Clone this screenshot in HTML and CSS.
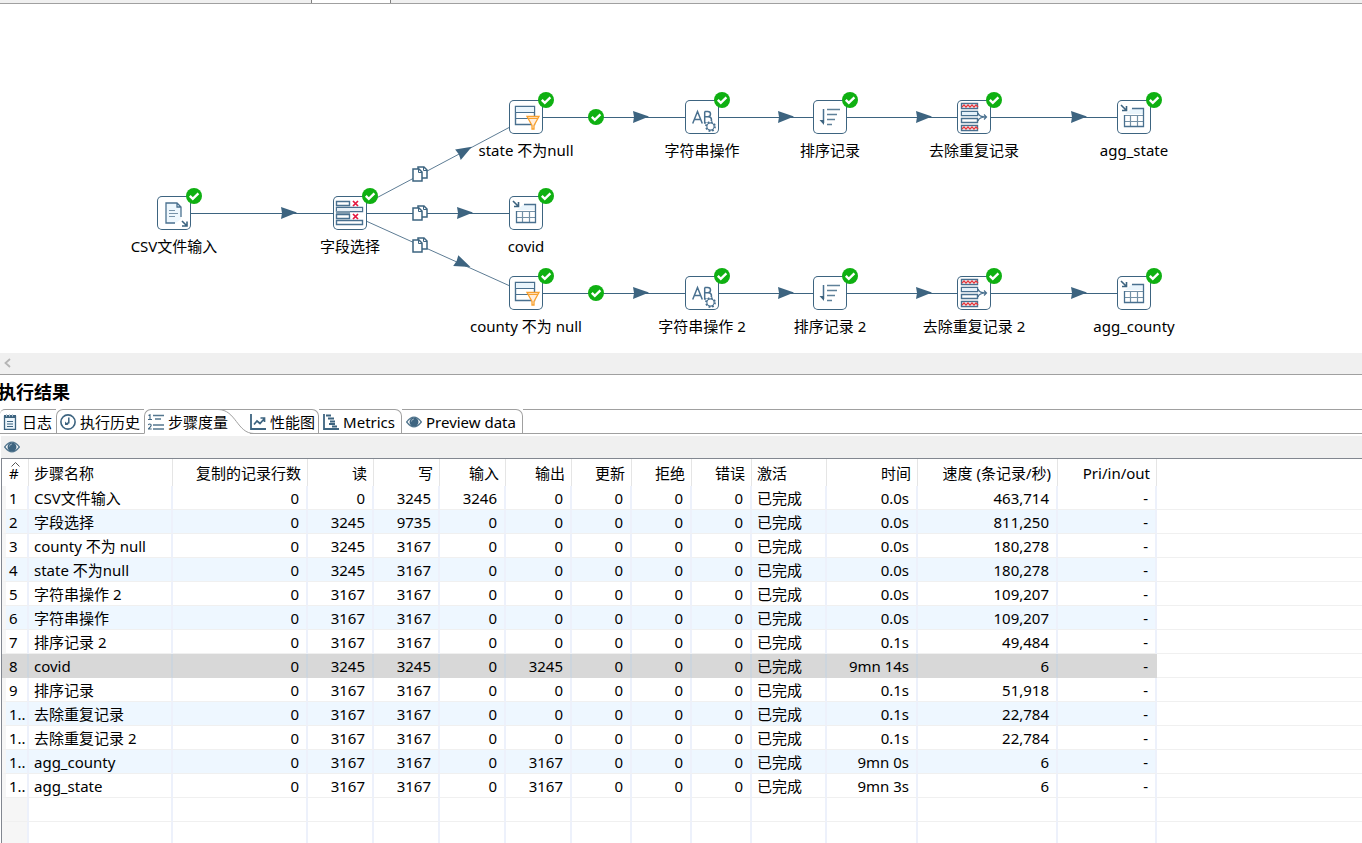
FILE: index.html
```html
<!DOCTYPE html>
<html lang="zh-CN">
<head>
<meta charset="utf-8">
<title>执行结果</title>
<link rel="stylesheet" href="styles.css">
</head>
<body>
<svg class="defs" aria-hidden="true">
  <defs>
    <symbol id="ok" viewBox="0 0 16 16"><circle cx="8" cy="8" r="8" fill="#0fb012"/><path d="M3.8 7.8l3 3 5.6-5.4" fill="none" stroke="#fff" stroke-width="2.4"/></symbol>
    <symbol id="csv" viewBox="0 0 34 34"><path d="M9 7h11l4 4v12l-5 4H9z" fill="#eef7fd"/><path d="M18 27H9V7h11l4 4v10M20 7v4h4" fill="none" stroke="#49708f" stroke-width="1.3"/><path d="M12 14.5h6M12 17.5h9M12 20.5h6" stroke="#7793a9"/><path d="M25 25l5 5M30 25.500v4.500h-5" fill="none" stroke="#3d6480" stroke-width="1.6"/></symbol>
    <symbol id="select" viewBox="0 0 34 34"><path d="M3.500 5.500h13v4h-13zM3.500 11.500h26v4h-26zM3.500 18.500h13v4h-13zM3.500 24.500h26v4h-26z" fill="#fff" stroke="#49708f" stroke-width="1.4"/><path d="M3 15h14v3H3z" fill="#7d98ac"/><path d="M4 12h25v3H4z" fill="#e7eff6"/><path d="M20 5l5 5M25 5l-5 5M20 18l5 5M25 18l-5 5" stroke="#e5173f" stroke-width="1.7"/></symbol>
    <symbol id="filter" viewBox="0 0 34 34"><path d="M6.500 6.500h19v18h-19z" fill="#fff" stroke="#49708f" stroke-width="1.4"/><path d="M7 7h18v5H7z" fill="#eaf5fc"/><path d="M6 12.500h20M6 18.500h20" stroke="#49708f" stroke-width="1.200"/><path d="M18 16.500h12l-5 9v3.500h-2v-3.500z" fill="#ffeedd" stroke="#f9a12e" stroke-width="1.3"/><path d="M19 18.500h10" stroke="#f9a12e"/></symbol>
    <symbol id="string" viewBox="0 0 34 34"><path d="M7.700 23.500L12.500 11.500l4.800 12M9.500 19.500h6M19.700 11.500v11.500h3.500q3.300 0 3.300-3.100t-3.300-3.100h-3.500M19.700 11.500h3q2.800 0 2.800 2.600t-2.800 2.700" fill="none" stroke="#49708f" stroke-width="1.500"/><circle cx="25.500" cy="26.500" r="5.500" fill="#fff"/><circle cx="25.500" cy="26.500" r="4.500" fill="none" stroke="#49708f" stroke-width="1.800" stroke-dasharray="1.767 1.767"/><circle cx="25.500" cy="26.500" r="3.600" fill="#fff" stroke="#49708f" stroke-width="1.100"/></symbol>
    <symbol id="sort" viewBox="0 0 34 34"><path d="M10.500 9v14" fill="none" stroke="#49708f" stroke-width="1.500"/><path d="M6.500 20h4.500v5z" fill="#3d6480"/><path d="M14 9.500h13M14 14.500h10M14 19.500h8M14 24.500h5" stroke="#5f8199" stroke-width="1.500"/></symbol>
    <symbol id="unique" viewBox="0 0 34 34"><path d="M4.500 3.500h16v5h-16zM4.500 11.500h16v4h-16zM4.500 18.500h16v4h-16zM4.500 25.500h16v5h-16z" fill="#fff" stroke="#49708f" stroke-width="1.400"/><path d="M5 12h15v3H5z" fill="#e4f0f9"/><path d="M5 7l2-2 2 2 2-2 2 2 2-2 2 2 2-2 2 2M5 29l2-2 2 2 2-2 2 2 2-2 2 2 2-2 2 2" fill="none" stroke="#e4373c" stroke-width="1.300"/><path d="M21 13q1 4 8 4M21 21q1-4 8-4M27 14.500l2.500 2.500-2.500 2.500" fill="none" stroke="#49708f" stroke-width="1.200"/></symbol>
    <symbol id="output" viewBox="0 0 34 34"><path d="M15 8h11v6H8z" fill="#eaf5fc"/><path d="M7 15.500h19M7 21.500h19M13.500 15v11M20.500 15v11" fill="none" stroke="#7591a6" stroke-width="1.200"/><path d="M15 8.500h11.500v18h-19V15" fill="none" stroke="#49708f" stroke-width="1.300"/><path d="M4 5l5 5M9.500 6v4.500H5" fill="none" stroke="#3d6480" stroke-width="1.600"/></symbol>
    <symbol id="copy" viewBox="0 0 16 16"><path d="M6 1h6l3 3v8H6z" fill="#fff" stroke="#3d6480" stroke-width="1.500"/><path d="M11.500 1v3.500H15" fill="none" stroke="#3d6480"/><path d="M1 3h6l3 3v9H1z" fill="#fff" stroke="#3d6480" stroke-width="1.500"/><path d="M6.500 3v3.500H10" fill="none" stroke="#3d6480"/></symbol>
    <symbol id="arrow" viewBox="0 0 16 12" overflow="visible"><path d="M0 0l16 5.500L0 12l1-6z" fill="#3d6480"/></symbol>
    <symbol id="eye" viewBox="0 0 16 16"><path d="M.7 8Q8-1.600 15.300 8 8 17.600.7 8z" fill="#fff" stroke="#54778f" stroke-width="1.300"/><circle cx="8" cy="8" r="4.500" fill="#3d6480"/><path d="M5.500 7.500Q5.500 5 8 5" fill="none" stroke="#9bb0c0"/></symbol>
  </defs>
</svg>

<div class="editor-tabs"><span class="editor-tab"></span></div>

<main class="canvas" aria-label="转换">
  <svg class="hops" viewBox="0 4 1362 349" width="1362" height="349" aria-hidden="true">
    <g class="line">
      <path d="M190 213.500H334M366 213.500H510"/>
      <path d="M542 117.500H686M718 117.500H814M846 117.500H958M990 117.500H1118"/>
      <path d="M542 293.500H686M718 293.500H814M846 293.500H958M990 293.500H1118"/>
    </g>
    <path class="diagonal" d="M366 203.500L510 127M366 221L510 286"/>
    <g>
      <use href="#arrow" x="281" y="207" width="16" height="12"/>
      <use href="#arrow" x="457" y="207" width="16" height="12"/>
      <use href="#arrow" x="633" y="111" width="16" height="12"/>
      <use href="#arrow" x="778" y="111" width="16" height="12"/>
      <use href="#arrow" x="916" y="111" width="16" height="12"/>
      <use href="#arrow" x="1071" y="111" width="16" height="12"/>
      <use href="#arrow" x="633" y="287" width="16" height="12"/>
      <use href="#arrow" x="778" y="287" width="16" height="12"/>
      <use href="#arrow" x="916" y="287" width="16" height="12"/>
      <use href="#arrow" x="1071" y="287" width="16" height="12"/>
      <use href="#arrow" x="-8" y="-6" width="16" height="12" transform="translate(465 151) rotate(-28)"/>
      <use href="#arrow" x="-8" y="-6" width="16" height="12" transform="translate(463 264) rotate(25)"/>
      <use href="#copy" x="412" y="166" width="16" height="16"/>
      <use href="#copy" x="412" y="205" width="16" height="16"/>
      <use href="#copy" x="412" y="237" width="16" height="16"/>
      <use href="#ok" x="588" y="109" width="16" height="16"/>
      <use href="#ok" x="588" y="285" width="16" height="16"/>
    </g>
  </svg>

  <div class="node" style="left:157px;top:192px"><svg class="step"><use href="#csv"/></svg><svg class="badge"><use href="#ok"/></svg><span>CSV文件输入</span></div>
  <div class="node" style="left:333px;top:192px"><svg class="step"><use href="#select"/></svg><svg class="badge"><use href="#ok"/></svg><span>字段选择</span></div>
  <div class="node" style="left:509px;top:96px"><svg class="step"><use href="#filter"/></svg><svg class="badge"><use href="#ok"/></svg><span>state 不为null</span></div>
  <div class="node" style="left:509px;top:192px"><svg class="step"><use href="#output"/></svg><svg class="badge"><use href="#ok"/></svg><span>covid</span></div>
  <div class="node" style="left:509px;top:272px"><svg class="step"><use href="#filter"/></svg><svg class="badge"><use href="#ok"/></svg><span>county 不为 null</span></div>
  <div class="node" style="left:685px;top:96px"><svg class="step"><use href="#string"/></svg><svg class="badge"><use href="#ok"/></svg><span>字符串操作</span></div>
  <div class="node" style="left:813px;top:96px"><svg class="step"><use href="#sort"/></svg><svg class="badge"><use href="#ok"/></svg><span>排序记录</span></div>
  <div class="node" style="left:957px;top:96px"><svg class="step"><use href="#unique"/></svg><svg class="badge"><use href="#ok"/></svg><span>去除重复记录</span></div>
  <div class="node" style="left:1117px;top:96px"><svg class="step"><use href="#output"/></svg><svg class="badge"><use href="#ok"/></svg><span>agg_state</span></div>
  <div class="node" style="left:685px;top:272px"><svg class="step"><use href="#string"/></svg><svg class="badge"><use href="#ok"/></svg><span>字符串操作 2</span></div>
  <div class="node" style="left:813px;top:272px"><svg class="step"><use href="#sort"/></svg><svg class="badge"><use href="#ok"/></svg><span>排序记录 2</span></div>
  <div class="node" style="left:957px;top:272px"><svg class="step"><use href="#unique"/></svg><svg class="badge"><use href="#ok"/></svg><span>去除重复记录 2</span></div>
  <div class="node" style="left:1117px;top:272px"><svg class="step"><use href="#output"/></svg><svg class="badge"><use href="#ok"/></svg><span>agg_county</span></div>
</main>

<div class="scrollbar"><button class="scroll-left" type="button" aria-label="向左滚动"><svg width="8" height="10" viewBox="0 0 8 10"><path d="M7 1L2.500 5 7 9" fill="none" stroke="#b5b5b5" stroke-width="1.800"/></svg></button></div>

<section class="results">
  <h1 class="title">执行结果</h1>
  <div class="tabs" role="tablist">
    <button class="tab first" role="tab" type="button"><svg class="icon" viewBox="0 0 16 16"><path d="M2.500 2.500h11v13h-11z" fill="#edf6fc" stroke="#3d6480" stroke-width="1.300"/><path d="M2 1h12v3H2z" fill="#3d6480"/><path d="M4.500 0v2.500M7.500 0v2.500M10.500 0v2.500" stroke="#b9cad7"/><path d="M5 7.500h6M5 10h6M5 12.500h6" stroke="#3d6480"/></svg>日志</button>
    <button class="tab left" role="tab" type="button"><svg class="icon" viewBox="0 0 16 16"><circle cx="8" cy="8" r="7.100" fill="#fff" stroke="#3d6480" stroke-width="1.600"/><path d="M8.800 3.500v5.300L6 10" fill="none" stroke="#3d6480" stroke-width="1.500"/><path d="M5 7.500l3.500 3.500H5z" fill="#3d6480"/></svg>执行历史</button>
    <button class="tab left active" role="tab" type="button" aria-selected="true"><svg class="icon" viewBox="0 0 16 16"><path d="M.5 1.500L2 .8V5M0 5.500h4M.3 11q.4-1 1.500-1 1.400 0 1.400 1.200 0 1-2.900 3.800h3.400" fill="none" stroke="#3d6480" stroke-width="1.100"/><path d="M5 1.500h11M7 5h6M5 11h11M5 15h11" stroke="#54778f" stroke-width="1.300"/></svg>步骤度量<svg class="curve" viewBox="0 0 40 25"><path d="M0 0h40v25H36C20 25 20 1 0 1z" fill="#fff"/><path d="M0 .5C18 .5 19 24.500 36 24.500h4M4 .5h36" fill="none" stroke="#a0a0a0"/></svg></button>
    <button class="tab right after-active" role="tab" type="button"><svg class="icon" viewBox="0 0 16 16"><path d="M1 0v15h15" fill="none" stroke="#3d6480" stroke-width="1.800"/><path d="M4 10.500l3-3.500 3 2.500 4-4.500M10.500 4H14.500v4" fill="none" stroke="#3d6480" stroke-width="1.700"/></svg>性能图</button>
    <button class="tab right wide" role="tab" type="button"><svg class="icon" viewBox="0 0 16 16"><path d="M1 0v15h15" fill="none" stroke="#3d6480" stroke-width="1.800"/><path d="M3 1.500h5M5 4.500h6M7 7.500h5M6 10h6M9 12.500h5" stroke="#3d6480" stroke-width="1.800"/></svg>Metrics</button>
    <button class="tab right wide" role="tab" type="button"><svg class="icon"><use href="#eye"/></svg>Preview data</button>
    <span class="tab-rest"></span>
  </div>
  <div class="toolbar"><button class="tool" type="button" aria-label="预览"><svg class="icon"><use href="#eye"/></svg></button></div>

  <table class="grid">
    <colgroup><col class="c-no"><col class="c-name"><col class="c-copied"><col class="c-io"><col class="c-io"><col class="c-io"><col class="c-io"><col class="c-count"><col class="c-count"><col class="c-count"><col class="c-state"><col class="c-time"><col class="c-speed"><col class="c-pri"><col></colgroup>
    <thead><tr><th class="no"><svg class="sort-mark" width="9" height="5" viewBox="0 0 9 5"><path d="M.5 4.500l4-4 4 4" fill="none" stroke="#555"/></svg>#</th><th class="txt">步骤名称</th><th>复制的记录行数</th><th>读</th><th>写</th><th>输入</th><th>输出</th><th>更新</th><th>拒绝</th><th>错误</th><th class="txt">激活</th><th>时间</th><th>速度 (条记录/秒)</th><th>Pri/in/out</th><th class="rest"></th></tr></thead>
    <tbody>
      <tr><td>1</td><td>CSV文件输入</td><td>0</td><td>0</td><td>3245</td><td>3246</td><td>0</td><td>0</td><td>0</td><td>0</td><td>已完成</td><td>0.0s</td><td>463,714</td><td>-</td><td></td></tr>
      <tr class="alt"><td>2</td><td>字段选择</td><td>0</td><td>3245</td><td>9735</td><td>0</td><td>0</td><td>0</td><td>0</td><td>0</td><td>已完成</td><td>0.0s</td><td>811,250</td><td>-</td><td></td></tr>
      <tr><td>3</td><td>county 不为 null</td><td>0</td><td>3245</td><td>3167</td><td>0</td><td>0</td><td>0</td><td>0</td><td>0</td><td>已完成</td><td>0.0s</td><td>180,278</td><td>-</td><td></td></tr>
      <tr class="alt"><td>4</td><td>state 不为null</td><td>0</td><td>3245</td><td>3167</td><td>0</td><td>0</td><td>0</td><td>0</td><td>0</td><td>已完成</td><td>0.0s</td><td>180,278</td><td>-</td><td></td></tr>
      <tr><td>5</td><td>字符串操作 2</td><td>0</td><td>3167</td><td>3167</td><td>0</td><td>0</td><td>0</td><td>0</td><td>0</td><td>已完成</td><td>0.0s</td><td>109,207</td><td>-</td><td></td></tr>
      <tr class="alt"><td>6</td><td>字符串操作</td><td>0</td><td>3167</td><td>3167</td><td>0</td><td>0</td><td>0</td><td>0</td><td>0</td><td>已完成</td><td>0.0s</td><td>109,207</td><td>-</td><td></td></tr>
      <tr><td>7</td><td>排序记录 2</td><td>0</td><td>3167</td><td>3167</td><td>0</td><td>0</td><td>0</td><td>0</td><td>0</td><td>已完成</td><td>0.1s</td><td>49,484</td><td>-</td><td></td></tr>
      <tr class="selected"><td>8</td><td>covid</td><td>0</td><td>3245</td><td>3245</td><td>0</td><td>3245</td><td>0</td><td>0</td><td>0</td><td>已完成</td><td>9mn 14s</td><td>6</td><td>-</td><td></td></tr>
      <tr><td>9</td><td>排序记录</td><td>0</td><td>3167</td><td>3167</td><td>0</td><td>0</td><td>0</td><td>0</td><td>0</td><td>已完成</td><td>0.1s</td><td>51,918</td><td>-</td><td></td></tr>
      <tr class="alt"><td>1..</td><td>去除重复记录</td><td>0</td><td>3167</td><td>3167</td><td>0</td><td>0</td><td>0</td><td>0</td><td>0</td><td>已完成</td><td>0.1s</td><td>22,784</td><td>-</td><td></td></tr>
      <tr><td>1..</td><td>去除重复记录 2</td><td>0</td><td>3167</td><td>3167</td><td>0</td><td>0</td><td>0</td><td>0</td><td>0</td><td>已完成</td><td>0.1s</td><td>22,784</td><td>-</td><td></td></tr>
      <tr class="alt"><td>1..</td><td>agg_county</td><td>0</td><td>3167</td><td>3167</td><td>0</td><td>3167</td><td>0</td><td>0</td><td>0</td><td>已完成</td><td>9mn 0s</td><td>6</td><td>-</td><td></td></tr>
      <tr><td>1..</td><td>agg_state</td><td>0</td><td>3167</td><td>3167</td><td>0</td><td>3167</td><td>0</td><td>0</td><td>0</td><td>已完成</td><td>9mn 3s</td><td>6</td><td>-</td><td></td></tr>
      <tr class="empty"><td></td><td></td><td></td><td></td><td></td><td></td><td></td><td></td><td></td><td></td><td></td><td></td><td></td><td></td><td></td></tr>
      <tr class="empty"><td></td><td></td><td></td><td></td><td></td><td></td><td></td><td></td><td></td><td></td><td></td><td></td><td></td><td></td><td></td></tr>
    </tbody>
  </table>
</section>
</body>
</html>
```
FILE: styles.css
```css
* { box-sizing: border-box; }

html, body { height: 100%; }

body {
  margin: 0;
  overflow: hidden;
  background: #fff;
  color: #000;
  font: 15px/20px "Noto Sans", "Noto Sans CJK SC", sans-serif;
}

button {
  margin: 0;
  padding: 0;
  border: 0;
  background: none;
  color: inherit;
  font: inherit;
}

.defs { display: none; }

.editor-tabs {
  height: 4px;
  padding-left: 311px;
  background: #f0f0f0;
  border-bottom: 1px solid #a0a0a0;
}

.editor-tab {
  display: block;
  width: 80px;
  height: 3px;
  background: #fff;
  border: solid #808080;
  border-width: 0 1px;
}

.canvas {
  position: relative;
  height: 349px;
  overflow: hidden;
}

.hops {
  position: absolute;
  left: 0;
  top: 0;
}

.line { stroke: #3d6480; fill: none; }
.diagonal { stroke: #5d7c94; fill: none; }

.node {
  position: absolute;
  width: 34px;
  display: flex;
  flex-direction: column;
  align-items: center;
  gap: 6px;
  white-space: nowrap;
}

.step {
  flex: none;
  width: 34px;
  height: 34px;
  background: #fff;
  border-radius: 5px;
  box-shadow: inset 0 0 0 1px #3d6480;
}

.badge {
  position: absolute;
  top: -8px;
  right: -11px;
  width: 16px;
  height: 16px;
}

.scrollbar {
  display: flex;
  align-items: center;
  height: 22px;
  padding: 0 0 2px 3px;
  background: #f0f0f0;
  border-bottom: 1px solid #a0a0a0;
}

.scroll-left { display: flex; }

.title {
  margin: 0 0 0 -2px;
  padding: 5px 0;
  font-size: 18px;
  line-height: 24px;
}

.tabs {
  display: flex;
  height: 25px;
}

.tab {
  display: flex;
  align-items: center;
  gap: 4px;
  padding: 0 4px 0 3px;
  border: solid #a0a0a0;
  border-width: 1px 0;
  white-space: nowrap;
}

.first { padding-left: 2px; border-top-left-radius: 5px; }
.left { border-left-width: 1px; border-top-left-radius: 7px; }
.right { padding: 0 3px 0 4px; border-right-width: 1px; border-top-right-radius: 7px; }
.wide { padding-right: 6px; }

.active {
  position: relative;
  padding-right: 22px;
  border-bottom-color: transparent;
}

.after-active { padding-left: 0; }

.curve {
  position: absolute;
  top: -1px;
  right: -8px;
  z-index: -1;
  width: 40px;
  height: 25px;
}

.tab-rest {
  flex: 1;
  border: solid #a0a0a0;
  border-width: 1px 0;
}

.icon {
  flex: none;
  width: 16px;
  height: 16px;
}

.toolbar {
  display: flex;
  align-items: center;
  height: 22px;
  margin: 2px 0 0 1px;
  padding-left: 3px;
  background: #f0f0f0;
}

.tool { display: flex; }

.grid {
  width: calc(100% - 1px);
  margin-left: 1px;
  table-layout: fixed;
  border-collapse: separate;
  border-spacing: 0;
  border: solid #828790;
  border-width: 1px 0 0 1px;
}

.c-no { width: 27px; }
.c-name { width: 144px; }
.c-copied { width: 135px; }
.c-io { width: 66px; }
.c-count { width: 60px; }
.c-state { width: 75px; }
.c-time { width: 91px; }
.c-speed { width: 140px; }
.c-pri { width: 99px; }

.grid th {
  position: relative;
  height: 27px;
  padding: 0 6px 0 0;
  border-right: 1px solid #e5e5e5;
  font-weight: 400;
  text-align: right;
  white-space: nowrap;
}

.grid .txt { padding-left: 5px; text-align: left; }
.grid .no { padding-left: 7px; text-align: left; }
.grid .rest { border: 0; }

.sort-mark {
  position: absolute;
  top: 3px;
  left: 9px;
}

.grid td {
  height: 24px;
  padding: 0 7px 0 0;
  border-right: 2px solid #edf1fb;
  border-bottom: 1px solid #f0f0f0;
  text-align: right;
  white-space: nowrap;
}

.grid td:first-child {
  padding: 0 0 0 3px;
  border-left: 4px solid #f6f6f6;
  text-align: left;
}

.grid td:nth-child(2), .grid td:nth-child(11) { padding-left: 5px; text-align: left; }
.grid td:last-child { border-right: 0; }
.alt td:not(:last-child) { background: #eef7ff; }
.selected td:not(:last-child) { background: #d8d8d8; border-color: #d8d8d8; }
.selected td:not(:nth-last-child(-n+2)) { border-right-color: #cdd5dd; }
.empty td:first-child { background: #f6f6f6; }
```
